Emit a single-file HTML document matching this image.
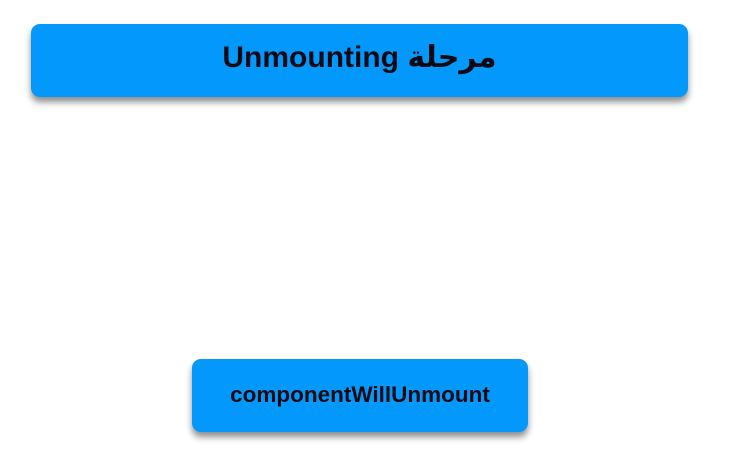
<!DOCTYPE html>
<html><head><meta charset="utf-8"><style>
body{margin:0;width:730px;height:466px;background:#fff;overflow:hidden;position:relative;font-family:"Liberation Sans","DejaVu Sans",sans-serif;}
.b{position:absolute;background:#0399fc;border-radius:9px;box-shadow:0 5px 7px rgba(0,0,0,0.45);display:flex;align-items:center;justify-content:center;color:#0a0a14;font-weight:bold;}
</style></head><body>
<div class="b" style="left:31px;top:24px;width:657px;height:73px;font-size:30px;padding-bottom:6px;box-sizing:border-box;"><span dir="ltr">Unmounting <span dir="rtl" style="font-family:'DejaVu Sans',sans-serif;">مرحلة</span></span></div>
<div class="b" style="left:192px;top:359px;width:336px;height:73px;font-size:22.5px;padding-bottom:2px;box-sizing:border-box;">componentWillUnmount</div>
</body></html>
